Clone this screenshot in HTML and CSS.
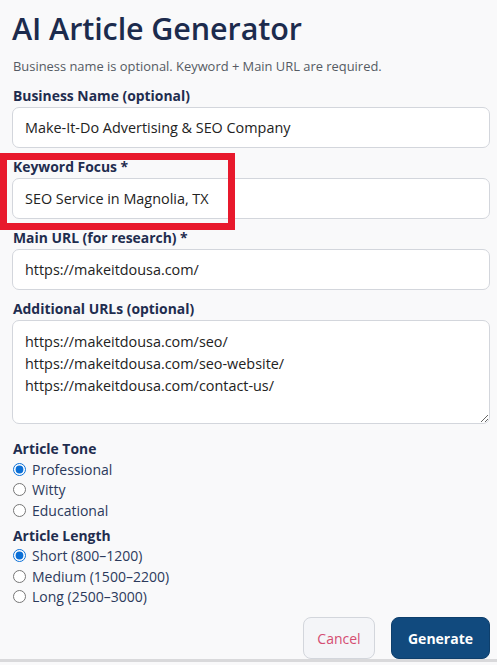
FILE: index.html
```html
<!DOCTYPE html>
<html lang="en">
<head>
  <meta charset="UTF-8">
  <meta name="viewport" content="width=device-width, initial-scale=1.0">
  <title>AI Article Generator</title>
  <link rel="stylesheet" href="styles.css">
</head>
<body>
  <div class="modal">
    <h1>AI Article Generator</h1>
    <p class="hint">Business name is optional. Keyword + Main URL are required.</p>

    <div class="field">
      <label for="business">Business Name (optional)</label>
      <input type="text" id="business" value="Make-It-Do Advertising &amp; SEO Company">
    </div>

    <div class="field">
      <label for="keyword">Keyword Focus *</label>
      <input type="text" id="keyword" value="SEO Service in Magnolia, TX">
    </div>

    <div class="field">
      <label for="mainUrl">Main URL (for research) *</label>
      <input type="text" id="mainUrl" value="https://makeitdousa.com/">
    </div>

    <div class="field">
      <label for="extraUrls">Additional URLs (optional)</label>
      <textarea id="extraUrls">https://makeitdousa.com/seo/
https://makeitdousa.com/seo-website/
https://makeitdousa.com/contact-us/</textarea>
    </div>

    <div class="group tone">
      <div class="group-title">Article Tone</div>
      <label class="radio"><input type="radio" name="tone" checked> Professional</label>
      <label class="radio"><input type="radio" name="tone"> Witty</label>
      <label class="radio"><input type="radio" name="tone"> Educational</label>
    </div>

    <div class="group length">
      <div class="group-title">Article Length</div>
      <label class="radio"><input type="radio" name="length" checked> Short (800–1200)</label>
      <label class="radio"><input type="radio" name="length"> Medium (1500–2200)</label>
      <label class="radio"><input type="radio" name="length"> Long (2500–3000)</label>
    </div>

    <div class="actions">
      <button class="btn cancel">Cancel</button>
      <button class="btn generate">Generate</button>
    </div>
  </div>

  <!-- annotation box -->
  <div class="highlight"></div>
</body>
</html>
```

FILE: styles.css
```css
body {
  margin: 0;
  padding: 0;
  font-family: "Open Sans", "Noto Sans", sans-serif;
  background-color: #f9f9fa;
  color: #1f2d4f;
}

.modal {
  height: 662px;
  box-sizing: border-box;
  padding: 8px 7px 0 12px;
  border-bottom: 3px solid #d9d9db;
  overflow: hidden;
}

h1 {
  margin: 0;
  font-size: 30.5px;
  font-weight: 600;
  line-height: 40px;
  color: #1c2b4d;
  letter-spacing: -0.1px;
}

.hint {
  margin: 9px 0 0 1px;
  font-size: 12.9px;
  line-height: 18px;
  color: #555b63;
}

.field {
  margin-top: 9px;
}

.field:first-of-type {
  margin-top: 11px;
}

.field label,
.group-title {
  display: block;
  font-size: 13.9px;
  font-weight: 700;
  line-height: 20px;
  color: #1f2d4f;
  margin: 0 0 1px 1px;
}

input[type="text"],
textarea {
  display: block;
  width: 100%;
  box-sizing: border-box;
  height: 41px;
  padding: 0 12px;
  border: 1px solid #d3d6dc;
  border-radius: 7px;
  background: #fff;
  font-family: inherit;
  font-size: 14.4px;
  color: #222;
  outline: none;
}

textarea {
  height: 104px;
  padding: 10px 12px;
  line-height: 22px;
  resize: vertical;
}

.group {
  margin-top: 15px;
}

.group.length {
  margin-top: 5px;
}

.group-title {
  margin-bottom: 0;
}

.radio {
  display: flex;
  align-items: center;
  height: 20.5px;
  font-size: 14px;
  color: #2c3a5c;
}

.radio input {
  width: 13px;
  height: 13px;
  margin: 0 6px 0 1px;
  accent-color: #0b6fd6;
}

.actions {
  display: flex;
  justify-content: flex-end;
  gap: 16px;
  margin-top: 10px;
}

.btn {
  height: 42px;
  border-radius: 8px;
  font-family: inherit;
  font-size: 14px;
  cursor: pointer;
}

.cancel {
  width: 72px;
  background-color: #f4f5f8;
  border: 1px solid #d3d6dc;
  color: #d44d72;
}

.generate {
  width: 99px;
  background-color: #114a7e;
  border: 1px solid #0e3f6c;
  color: #fff;
  font-weight: 700;
}

.highlight {
  position: absolute;
  left: 0;
  top: 153px;
  width: 235px;
  height: 77px;
  box-sizing: border-box;
  border: 7px solid #e8192c;
  pointer-events: none;
}
```
